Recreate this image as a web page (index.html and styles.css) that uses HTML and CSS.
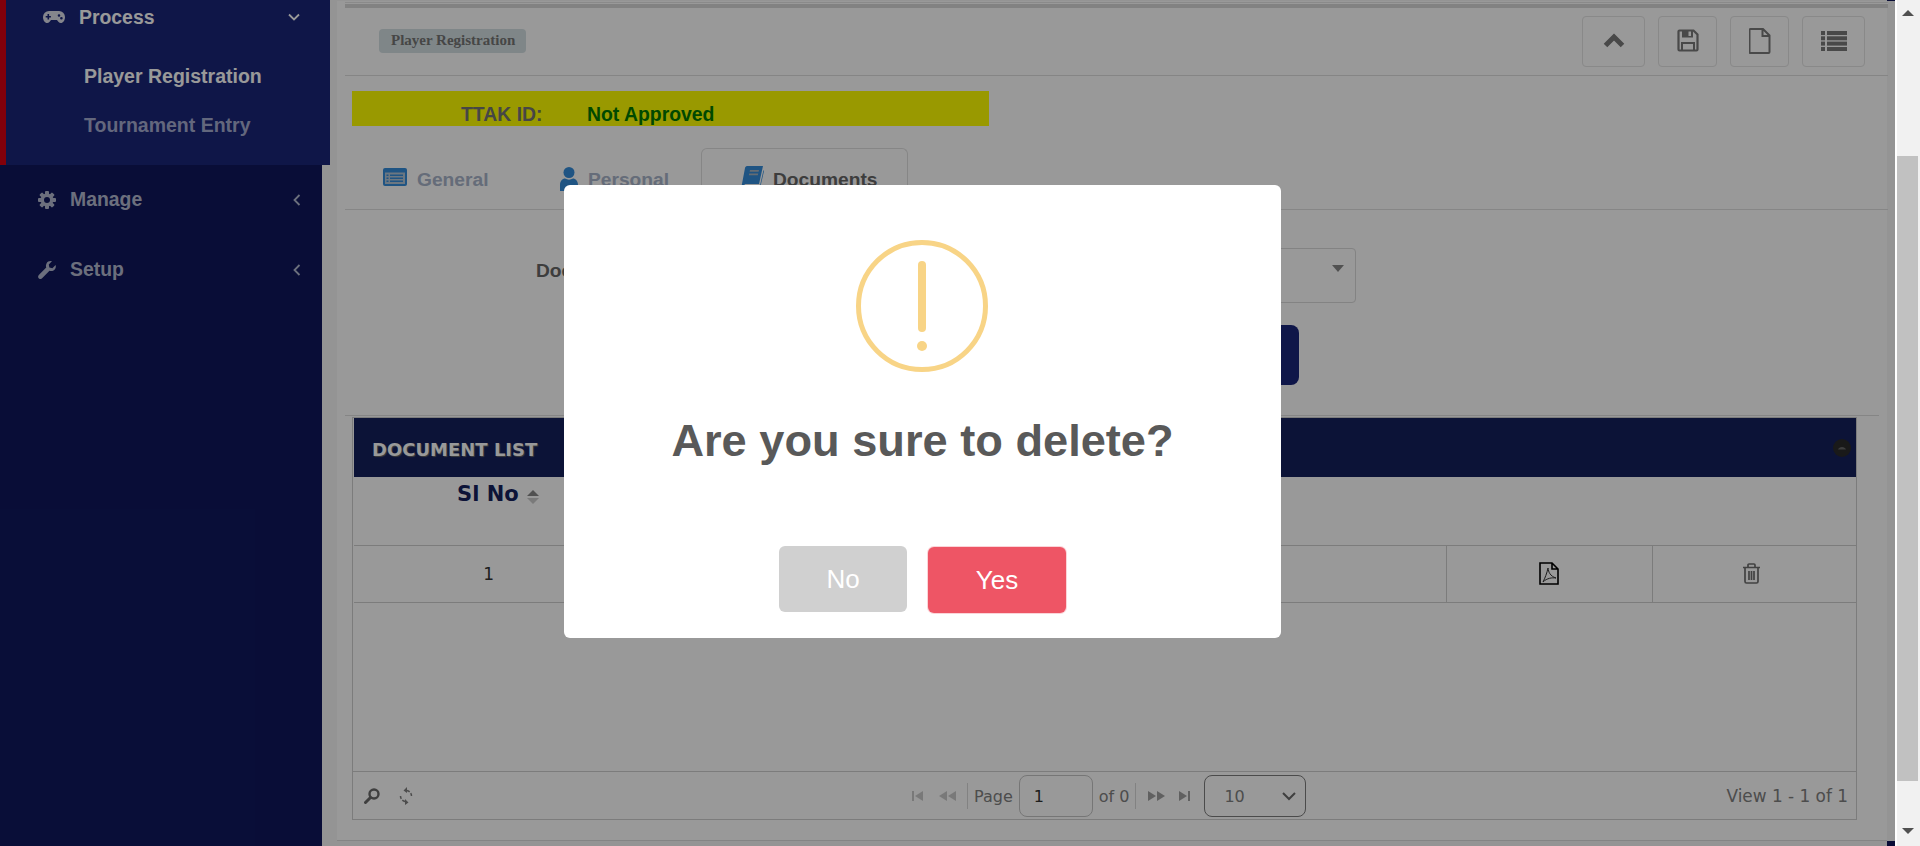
FILE: index.html
```html
<!DOCTYPE html>
<html lang="en">

<head>
    <meta charset="UTF-8" />
    <meta name="viewport" content="width=device-width, initial-scale=1" />
    <title>Player Registration</title>
    <link rel="stylesheet" href="styles.css">
</head>

<body>
    <div class="page">
        <aside class="sidebar">
            <div class="navopen">
                <div class="navhead">
                    <svg class="navicon-pad" viewBox="0 0 22 12"><path fill="#fff" fill-rule="evenodd" d="M6 0h10a6 6 0 0 1 6 6c0 3.4-1.8 6-4.2 6-1.8 0-2.8-1.6-3.8-3H8C7 10.400 6 12 4.200 12 1.800 12 0 9.400 0 6a6 6 0 0 1 6-6zM4.500 3v2H2.700v1.600h1.800v2h1.600v-2h1.800V5H6.100V3zM16 3.200a1.300 1.300 0 1 0 0 2.600 1.300 1.300 0 0 0 0-2.600zm2.400 2.800a1.300 1.300 0 1 0 0 2.600 1.300 1.300 0 0 0 0-2.600z"/></svg>
                    <span class="navtext">Process</span>
                    <svg class="navchev-down" viewBox="0 0 12 8"><path d="M1 1.500l5 5 5-5" fill="none" stroke="#fff" stroke-width="1.800"/></svg>
                </div>
                <a class="navsub active">Player Registration</a>
                <a class="navsub">Tournament Entry</a>
            </div>
            <div class="navitem">
                <svg class="navicon" viewBox="0 0 18 18"><g fill="#b4bad0"><circle cx="9" cy="9" r="6.500"/><rect x="7" y="0" width="4" height="18" rx="1"/><rect x="7" y="0" width="4" height="18" rx="1" transform="rotate(45 9 9)"/><rect x="7" y="0" width="4" height="18" rx="1" transform="rotate(90 9 9)"/><rect x="7" y="0" width="4" height="18" rx="1" transform="rotate(135 9 9)"/></g><circle cx="9" cy="9" r="3" fill="#0f175d"/></svg>
                <span class="navtext dim">Manage</span>
                <svg class="navchev" viewBox="0 0 8 12"><path d="M6.500 1l-5 5 5 5" fill="none" stroke="#b4bad0" stroke-width="1.800"/></svg>
            </div>
            <div class="navitem">
                <svg class="navicon" viewBox="0 0 19 19"><path fill="#b4bad0" d="M18.600 4.300c.6 2.400-.2 4.600-2.200 5.700-1.500.8-3 .8-4.300.3L4.600 18c-1.200 1.300-3 1.300-3.900.3s-.8-2.700.4-3.900l7.600-7.500c-.5-1.300-.5-2.900.3-4.300C10.100.6 12.300-.3 14.700.3l-3.300 3.400.6 3.200 3.200.7z"/></svg>
                <span class="navtext dim">Setup</span>
                <svg class="navchev" viewBox="0 0 8 12"><path d="M6.500 1l-5 5 5 5" fill="none" stroke="#b4bad0" stroke-width="1.800"/></svg>
            </div>
        </aside>

        <main class="content">
            <div class="edge"><span class="edgecorner"></span></div>
            <section class="card">
                <div class="topband"></div>
                <header class="titlebar">
                    <span class="badge">Player Registration</span>
                    <div class="toolbtns">
                        <button class="toolbtn wide" aria-label="Collapse">
                            <svg width="22" height="15" viewBox="0 0 22 15"><path d="M2.500 12.500L11 4l8.500 8.500" fill="none" stroke="#7a7a7a" stroke-width="5"/></svg>
                        </button>
                        <button class="toolbtn" aria-label="Save">
                            <svg width="22" height="23" viewBox="0 0 22 23"><path fill="none" stroke="#7a7a7a" stroke-width="2.200" d="M2.500 1.500h14l4 4v15a1 1 0 0 1-1 1h-17a1 1 0 0 1-1-1v-18a1 1 0 0 1 1-1z"/><path fill="#7a7a7a" d="M5 1.500h11v7H5z"/><path fill="#fff" d="M11.500 2.500h2.500v4.500h-2.500z"/><path fill="none" stroke="#7a7a7a" stroke-width="2" d="M5 21.500v-7.500h12v7.500"/></svg>
                        </button>
                        <button class="toolbtn" aria-label="New">
                            <svg width="22" height="26" viewBox="0 0 22 26"><path fill="none" stroke="#7a7a7a" stroke-width="2" d="M1.500 1h12.500l6.500 6.500v16.500a1 1 0 0 1-1 1h-18a1 1 0 0 1-1-1v-22a1 1 0 0 1 1-1zM13.500 1v7h7"/></svg>
                        </button>
                        <button class="toolbtn wide" aria-label="List">
                            <svg width="26" height="20" viewBox="0 0 26 20"><g fill="#7a7a7a"><rect y="0" width="4" height="4"/><rect x="6" y="0" width="20" height="4"/><rect y="5.300" width="4" height="4"/><rect x="6" y="5.300" width="20" height="4"/><rect y="10.600" width="4" height="4"/><rect x="6" y="10.600" width="20" height="4"/><rect y="16" width="4" height="4"/><rect x="6" y="16" width="20" height="4"/></g></svg>
                        </button>
                    </div>
                </header>

                <div class="idbar">
                    <span class="idlabel">TTAK ID:</span>
                    <span class="idvalue">Not Approved</span>
                </div>

                <nav class="tabs">
                    <a class="tab">
                        <svg width="24" height="18" viewBox="0 0 24 18"><rect width="24" height="18" rx="2" fill="#348cda"/><rect x="2" y="4.500" width="20" height="11.500" fill="#b4c6d8"/><g fill="#348cda"><rect x="3.500" y="6.500" width="2" height="1.500"/><rect x="7" y="6.500" width="13" height="1.500"/><rect x="3.500" y="9.500" width="2" height="1.500"/><rect x="7" y="9.500" width="13" height="1.500"/><rect x="3.500" y="12.500" width="2" height="1.500"/><rect x="7" y="12.500" width="13" height="1.500"/></g></svg>
                        <span>General</span>
                    </a>
                    <a class="tab">
                        <svg class="personicon" width="18" height="24" viewBox="0 0 18 24"><circle cx="9" cy="5.500" r="5.500" fill="#348cda"/><path d="M0 24v-6c0-4 2.500-6.500 5-6.500 2.500 1.500 5.500 1.500 8 0 2.500 0 5 2.500 5 6.500v6z" fill="#348cda"/></svg>
                        <span>Personal</span>
                    </a>
                    <a class="tab active">
                        <svg class="bookicon" width="23" height="24" viewBox="0 0 23 24"><path fill="#348cda" d="M6 0h16l-4 18H4.500c-1.200 0-1.500 1.500-.3 1.500H19L22.500 4 23 5l-4 17.500c-.1.800-.8 1.500-1.500 1.500H3c-2 0-3-1.500-2.500-3.500L4 2c.2-1 1-2 2-2z"/><path fill="#a8b4c0" d="M9 4h9l-.4 1.800h-9zM8.200 7.500h9l-.4 1.800h-9z"/></svg>
                        <span>Documents</span>
                    </a>
                </nav>

                <div class="formrow">
                    <label class="formlabel">Document Type</label>
                    <div class="selectbox"><span class="caret"></span></div>
                </div>
                <div class="formbtns">
                    <button class="savebtn">Upload</button>
                </div>

                <div class="griddivider"></div>

                <div class="gridbox">
                    <div class="gridcaption">
                        <span class="captiontext">DOCUMENT LIST</span>
                        <svg class="collapseicon" width="18" height="18" viewBox="0 0 18 18"><circle cx="9" cy="9" r="9" fill="#2a2a2a"/><path d="M5 10.500C6 7 12 7 13 10.500z" fill="#666"/></svg>
                    </div>
                    <table class="gridtable">
                        <thead>
                            <tr>
                                <th class="colsl"><span class="slhead">Sl No <span class="sorter"><i class="arrowup"></i><i class="arrowdown"></i></span></span></th>
                                <th></th>
                                <th class="colpdf"></th>
                                <th class="coltrash"></th>
                            </tr>
                        </thead>
                        <tbody>
                            <tr>
                                <td class="colsl">1</td>
                                <td></td>
                                <td class="colpdf">
                                    <svg width="20" height="23" viewBox="0 0 20 23"><path fill="none" stroke="#000" stroke-width="1.600" d="M1 1h12l6 6v15H1zM13 1v6h6"/><path fill="none" stroke="#333" stroke-width="1" d="M9 6c.5 4 2 8 8 10-4-.5-9 0-13 4 2-4 4-9 5-14z"/></svg>
                                </td>
                                <td class="coltrash">
                                    <svg width="19" height="21" viewBox="0 0 19 21"><g fill="none" stroke="#6f6f6f" stroke-width="1.700"><path d="M1 4.500h17M6 4.500V2a1 1 0 0 1 1-1h5a1 1 0 0 1 1 1v2.500M3 4.500v14a1.500 1.500 0 0 0 1.500 1.500h10a1.500 1.500 0 0 0 1.500-1.500v-14M7 8v9M9.500 8v9M12 8v9"/></g></svg>
                                </td>
                            </tr>
                        </tbody>
                    </table>
                    <div class="gridempty"></div>
                    <div class="pager">
                        <div class="pagerleft">
                            <svg width="16" height="16" viewBox="0 0 16 16"><circle cx="10" cy="6" r="4.500" fill="none" stroke="#6a6a6a" stroke-width="2.400"/><path d="M6.500 9.500L1.500 14.500" stroke="#6a6a6a" stroke-width="3" stroke-linecap="round"/></svg>
                            <svg width="14" height="18" viewBox="0 0 14 18"><g fill="none" stroke="#7f7f7f" stroke-width="1.500" stroke-dasharray="3 1.500"><path d="M12.500 9A5.500 5.500 0 0 0 7 3.500M1.500 9A5.500 5.500 0 0 0 7 14.500"/></g><path fill="#7f7f7f" d="M8 0v6L4.500 3.500zM6 12v6l3.500-2.500z"/></svg>
                        </div>
                        <div class="pagercenter">
                            <span class="pagearrow first"><i class="bar"></i><i class="tri left"></i></span>
                            <span class="pagearrow prev"><i class="tri left"></i><i class="tri left"></i></span>
                            <span class="pagersep"></span>
                            <span class="pagertext">Page</span>
                            <span class="pageinput">1</span>
                            <span class="pagertext">of 0</span>
                            <span class="pagersep"></span>
                            <span class="pagearrow next"><i class="tri right"></i><i class="tri right"></i></span>
                            <span class="pagearrow last"><i class="tri right"></i><i class="bar"></i></span>
                            <span class="pagesize">10
                                <svg width="14" height="9" viewBox="0 0 14 9"><path d="M1 1l6 6 6-6" fill="none" stroke="#6a6a6a" stroke-width="2"/></svg>
                            </span>
                        </div>
                        <div class="pagerright">View 1 - 1 of 1</div>
                    </div>
                </div>
            </section>
            <div class="edge bottom"><span class="edgecorner"></span></div>
        </main>

        <div class="overlay">
            <div class="modal">
                <div class="warnicon"><span class="warnbar"></span><span class="warndot"></span></div>
                <h2 class="modaltitle">Are you sure to delete?</h2>
                <div class="modalbtns">
                    <button class="modalbtn no">No</button>
                    <button class="modalbtn yes">Yes</button>
                </div>
            </div>
        </div>
    </div>

    <div class="scrollbar">
        <div class="sbtop"><span class="sbarrow up"></span></div>
        <div class="sbthumb"></div>
        <div class="sbbottom"><span class="sbarrow down"></span></div>
    </div>
</body>

</html>
```

FILE: styles.css
```css
* {
    box-sizing: border-box;
}

body {
    margin: 0;
    height: 100vh;
    display: flex;
    overflow: hidden;
    font-family: "Liberation Sans", Arial, sans-serif;
    background: #fff;
}

.page {
    flex: 1;
    position: relative;
    display: flex;
    overflow: hidden;
}

/* Menu lateral */
.sidebar {
    width: 322px;
    flex: none;
    background: #0f175d;
}

.navopen {
    position: relative;
    z-index: 2;
    width: 330px;
    height: 165px;
    background: #192578;
    border-left: 6px solid #d90011;
}

.navhead {
    height: 34px;
    display: flex;
    align-items: center;
    padding-left: 37px;
    position: relative;
}

.navicon-pad {
    width: 22px;
    height: 12px;
    margin-right: 14px;
    opacity: .85;
}

.navtext {
    font-size: 19.4px;
    font-weight: bold;
    color: #fff;
}

.navtext.dim {
    color: #b4bad0;
}

.navchev-down {
    position: absolute;
    left: 282px;
    top: 13px;
    width: 12px;
    height: 8px;
}

.navsub {
    display: block;
    margin-left: 78px;
    font-size: 19.5px;
    font-weight: bold;
    color: #a6acd0;
    line-height: 24px;
}

.navsub.active {
    color: #fff;
    margin-top: 30px;
    margin-bottom: 25px;
}

.navitem {
    height: 69px;
    display: flex;
    align-items: center;
    padding: 0 21px 0 38px;
}

.navitem + .navitem {
    margin-top: 1px;
}

.navicon {
    width: 18px;
    height: 18px;
    margin-right: 14px;
}

.navchev {
    width: 8px;
    height: 12px;
    margin-left: auto;
}

/* Area principal */
.content {
    flex: 1;
    display: flex;
    flex-direction: column;
    background: #f7f7f7;
    padding-left: 15px;
    min-width: 0;
}

.edge {
    height: 1px;
    display: flex;
    justify-content: flex-end;
    flex: none;
}

.edge.bottom {
    height: 5px;
}

.edgecorner {
    width: 8px;
    background: #0f175d;
}

.card {
    flex: 1;
    background: #fff;
    margin-right: 8px;
    padding-left: 8px;
    border-bottom: 1px solid #ddd;
}

.topband {
    height: 6px;
    border-top: 1px solid #e6e6e6;
    margin-top: 1px;
    background: linear-gradient(#fff 1px, #d9d9d9 1px);
    margin-right: -1px;
}

.titlebar {
    height: 68px;
    display: flex;
    align-items: flex-start;
    justify-content: space-between;
    border-bottom: 1px solid #dedede;
    padding: 8px 23px 0 34px;
    margin-right: -1px;
}

.badge {
    margin-top: 13px;
    height: 24px;
    line-height: 23px;
    padding: 0 11px 0 12px;
    background: #d4e0e3;
    border-radius: 4px;
    font-family: "Liberation Serif", serif;
    font-weight: bold;
    font-size: 15px;
    color: #757575;
}

.toolbtns {
    display: flex;
    gap: 13px;
}

.toolbtn {
    height: 51px;
    width: 59px;
    padding: 0;
    display: flex;
    align-items: center;
    justify-content: center;
    background: #fff;
    border: 1px solid #e4e4e4;
    border-radius: 4px;
}

.toolbtn.wide {
    width: 63px;
}

.toolbtn svg {
    margin-bottom: 2px;
}

.idbar {
    width: 637px;
    height: 35px;
    margin: 15px 0 0 7px;
    background: #ff0;
    display: flex;
    padding: 11px 0 0 109px;
    font-size: 19.4px;
    font-weight: bold;
    line-height: 24px;
}

.idlabel {
    color: #757575;
    width: 126px;
}

.idvalue {
    color: #007a00;
}

.tabs {
    margin-top: 22px;
    height: 62px;
    display: grid;
    grid-template-columns: 177px 179px 207px;
    border-bottom: 1px solid #e0e0e0;
    margin-right: -1px;
}

.tab {
    display: flex;
    align-items: flex-start;
    gap: 10px;
    padding: 20px 0 0 38px;
    font-size: 19.2px;
    font-weight: bold;
    line-height: 23px;
    color: #a8b4ca;
}

.tab svg {
    flex: none;
}

.tab .personicon {
    margin-top: -1px;
}

.tab .bookicon {
    margin: -2px 0 0 1px;
    width: 23px;
}

.tab.active {
    color: #666;
    border: 1px solid #e0e0e0;
    border-bottom: none;
    border-radius: 6px 6px 0 0;
    padding-top: 19px;
    padding-left: 38px;
}

.tab.active span {
    margin-left: -1px;
}

.formrow {
    margin-top: 38px;
    display: flex;
    align-items: flex-start;
    padding-left: 191px;
}

.formlabel {
    margin-top: 12px;
    font-size: 19.2px;
    font-weight: bold;
    color: #666;
    width: 264px;
}

.selectbox {
    width: 556px;
    height: 55px;
    border: 1px solid #dadada;
    border-radius: 4px;
    position: relative;
}

.caret {
    position: absolute;
    right: 11px;
    top: 16px;
    border-left: 6px solid transparent;
    border-right: 6px solid transparent;
    border-top: 7px solid #888;
}

.formbtns {
    margin-top: 22px;
    display: flex;
    justify-content: flex-end;
    padding-right: 588px;
}

.savebtn {
    width: 200px;
    height: 60px;
    border: none;
    border-radius: 8px;
    background: #1a257a;
    color: #fff;
    font-size: 18px;
}

.griddivider {
    height: 1px;
    margin: 30px 8px 0 0;
    background: #dedede;
}

.gridbox {
    margin: 1px 30px 0 7px;
    height: 403px;
    border: 1px solid #cfcfcf;
    display: flex;
    flex-direction: column;
    padding-left: 1px;
}

.gridcaption {
    height: 59px;
    flex: none;
    background: #15205d;
    display: flex;
    align-items: center;
    justify-content: space-between;
    padding: 0 5px 0 18px;
    font-family: "DejaVu Sans", sans-serif;
    font-weight: bold;
    font-size: 18px;
    color: #fff;
    text-shadow: 1px 1px 1px #666;
}

.captiontext {
    margin-top: 3px;
}

.gridtable {
    width: 100%;
    table-layout: fixed;
    border-collapse: collapse;
    font-family: "DejaVu Sans", sans-serif;
    flex: none;
}

.gridtable th {
    height: 68px;
    vertical-align: top;
    padding-top: 5px;
    font-size: 21px;
    color: #15205d;
    border-bottom: 1px solid #cfcfcf;
}

.gridtable td {
    height: 57px;
    text-align: center;
    font-size: 17px;
    color: #333;
    border-bottom: 1px solid #cfcfcf;
}

.gridtable tbody td + td {
    border-left: 1px solid #cfcfcf;
}

.gridtable svg {
    display: block;
    margin: 0 auto;
}

.colsl {
    width: 270px;
}

.colpdf {
    width: 206px;
}

.coltrash {
    width: 204px;
}

.gridtable td.coltrash {
    padding-right: 7px;
}

.slhead {
    margin-left: 18px;
}

.sorter {
    display: inline-flex;
    flex-direction: column;
    gap: 2px;
    vertical-align: 5px;
    margin-left: 1px;
}

.sorter i {
    display: block;
    border-left: 6px solid transparent;
    border-right: 6px solid transparent;
}

.arrowup {
    border-bottom: 6px solid #888;
}

.arrowdown {
    border-top: 6px solid #ccc;
}

.gridempty {
    flex: 1;
}

.pager {
    height: 48px;
    flex: none;
    position: relative;
    display: flex;
    align-items: center;
    justify-content: space-between;
    border-top: 1px solid #cfcfcf;
    margin-left: -1px;
    padding: 0 8px 0 11px;
    font-family: "DejaVu Sans", sans-serif;
    font-size: 16px;
    color: #808080;
}

.pagerright {
    font-size: 16.9px;
}

.pagerleft {
    display: flex;
    align-items: center;
    gap: 19px;
}

.pagercenter {
    position: absolute;
    left: 559px;
    top: 3px;
    display: flex;
    align-items: center;
    height: 42px;
}

.pagearrow {
    display: flex;
    align-items: center;
    gap: 1px;
    width: 14px;
    height: 12px;
}

.pagearrow.first {
    margin-right: 13px;
    opacity: .55;
}

.pagearrow.prev {
    width: 16px;
    margin-right: 12px;
    opacity: .55;
}

.pagearrow.next {
    width: 16px;
    margin: 0 15px 0 12px;
}

.pagearrow.last {
    margin-right: 11px;
}

.tri {
    display: block;
    border-top: 5px solid transparent;
    border-bottom: 5px solid transparent;
}

.tri.left {
    border-right: 8px solid #a0a0a0;
}

.tri.right {
    border-left: 8px solid #a0a0a0;
}

.bar {
    display: block;
    width: 2px;
    height: 10px;
    background: #a0a0a0;
}

.pagersep {
    width: 1px;
    height: 26px;
    background: #d9d9d9;
}

.pagertext {
    margin: 0 6px;
    white-space: nowrap;
}

.pageinput {
    width: 74px;
    height: 42px;
    border: 1px solid #c5c5c5;
    border-radius: 8px;
    display: flex;
    align-items: center;
    padding-left: 14px;
    color: #333;
}

.pagesize {
    width: 102px;
    height: 42px;
    border: 1px solid #7d7d7d;
    border-radius: 8px;
    display: flex;
    align-items: center;
    justify-content: space-between;
    padding: 0 9px 0 19px;
}

/* Camada do alerta */
.overlay {
    position: absolute;
    inset: 0;
    z-index: 5;
    background: rgba(0, 0, 0, 0.4);
    padding: 185px 0 0 564px;
}

.modal {
    width: 717px;
    height: 453px;
    background: #fff;
    border-radius: 6px;
    display: flex;
    flex-direction: column;
    align-items: center;
    padding-top: 55px;
}

.warnicon {
    width: 132px;
    height: 132px;
    margin-right: 2px;
    border: 5px solid #f8d486;
    border-radius: 50%;
    display: flex;
    flex-direction: column;
    align-items: center;
    padding-top: 16px;
}

.warnbar {
    width: 8px;
    height: 71px;
    border-radius: 4px;
    background: #f8d486;
}

.warndot {
    width: 10px;
    height: 10px;
    margin-top: 9px;
    border-radius: 50%;
    background: #f8d486;
}

.modaltitle {
    margin: 41px 0 0;
    font-size: 45.2px;
    line-height: 56px;
    font-weight: bold;
    color: #595959;
}

.modalbtns {
    margin-top: 77px;
    display: flex;
    align-items: flex-start;
    gap: 22px;
}

.modalbtn {
    height: 66px;
    border: none;
    border-radius: 6px;
    color: #fff;
    font-family: "Liberation Sans", Arial, sans-serif;
    font-size: 26px;
}

.modalbtn.no {
    width: 128px;
    background: #d0d0d0;
}

.modalbtn.yes {
    width: 138px;
    margin: 1px 0 0 -1px;
    background: #ee5565;
    box-shadow: 0 0 0 1px rgba(238, 85, 101, 0.25);
}

/* Barra de rolagem */
.scrollbar {
    width: 25px;
    flex: none;
    display: flex;
    flex-direction: column;
    background: #f1f1f1;
    border-left: 2px solid #fff;
    padding-right: 2px;
}

.sbtop {
    height: 156px;
    flex: none;
    padding-top: 10px;
    display: flex;
    justify-content: center;
}

.sbthumb {
    height: 625px;
    flex: none;
    background: #c1c1c1;
}

.sbbottom {
    flex: 1;
    display: flex;
    justify-content: center;
    padding-top: 47px;
}

.sbarrow {
    height: 6px;
    border-left: 6px solid transparent;
    border-right: 6px solid transparent;
}

.sbarrow.up {
    border-bottom: 6px solid #505050;
}

.sbarrow.down {
    border-top: 6px solid #505050;
}
```
